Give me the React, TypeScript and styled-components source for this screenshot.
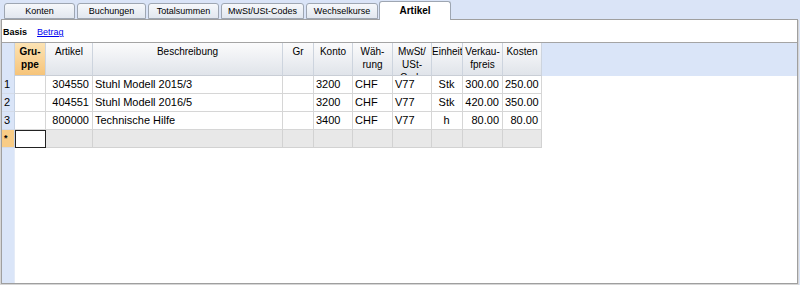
import styled, { createGlobalStyle } from 'styled-components'

const GlobalStyle = createGlobalStyle`
  html, body {
    margin: 0;
    padding: 0;
    background: #dae4f7;
    font-family: "Liberation Sans", Arial, sans-serif;
  }
`

const COLS = '13px 31px 47px 190px 31px 39px 40px 39px 31px 40px 39px'

type Align = 'left' | 'right' | 'center'

const tabs = ['Konten', 'Buchungen', 'Totalsummen', 'MwSt/USt-Codes', 'Wechselkurse', 'Artikel']
const tabWidths = [71, 69, 71, 83, 72, 72]

const headers: { lines: string[]; selected?: boolean }[] = [
  { lines: ['Gru-', 'ppe'], selected: true },
  { lines: ['Artikel'] },
  { lines: ['Beschreibung'] },
  { lines: ['Gr'] },
  { lines: ['Konto'] },
  { lines: ['Wäh-', 'rung'] },
  { lines: ['MwSt/', 'USt-', 'Code'] },
  { lines: ['Einheit'] },
  { lines: ['Verkau-', 'fpreis'] },
  { lines: ['Kosten'] },
]

const aligns: Align[] = ['left', 'right', 'left', 'left', 'left', 'left', 'left', 'center', 'right', 'right']

const rows = [
  ['', '304550', 'Stuhl Modell 2015/3', '', '3200', 'CHF', 'V77', 'Stk', '300.00', '250.00'],
  ['', '404551', 'Stuhl Modell 2016/5', '', '3200', 'CHF', 'V77', 'Stk', '420.00', '350.00'],
  ['', '800000', 'Technische Hilfe', '', '3400', 'CHF', 'V77', 'h', '80.00', '80.00'],
]

export default function App() {
  return (
    <Page>
      <GlobalStyle />
      <TabBar>
        {tabs.map((t, i) => (
          <Tab key={t} $active={t === 'Artikel'} $width={tabWidths[i]}>
            {t}
          </Tab>
        ))}
      </TabBar>

      <Panel>
        <Toolbar>
          <ViewLabel>Basis</ViewLabel>
          <ViewLink href="#">Betrag</ViewLink>
        </Toolbar>

        <Grid>
          <HeaderRow>
            <Corner />
            {headers.map((h, i) => (
              <HeadCell key={i} $selected={h.selected}>
                {h.lines.map((l, j) => (
                  <div key={j}>{l}</div>
                ))}
              </HeadCell>
            ))}
            <HeadRest />
          </HeaderRow>

          {rows.map((r, i) => (
            <Row key={i}>
              <RowNum>{i + 1}</RowNum>
              {r.map((v, j) => (
                <Cell key={j} $align={aligns[j]}>
                  {v}
                </Cell>
              ))}
            </Row>
          ))}

          <Row>
            <RowNum $current>*</RowNum>
            {aligns.map((a, j) => (
              <NewCell key={j} $active={j === 0} />
            ))}
          </Row>

          <Filler>
            <Stripe />
          </Filler>
        </Grid>
      </Panel>
    </Page>
  )
}

const Page = styled.div`
  width: 800px;
  height: 285px;
  display: flex;
  flex-direction: column;
  overflow: hidden;
`

const TabBar = styled.div`
  height: 19px;
  display: flex;
  align-items: flex-end;
  gap: 2px;
  padding-left: 4px;
  position: relative;
  z-index: 2;
`

const Tab = styled.div<{ $active?: boolean; $width: number }>`
  box-sizing: border-box;
  width: ${p => p.$width}px;
  height: ${p => (p.$active ? 19 : 16)}px;
  margin-bottom: ${p => (p.$active ? -1 : 0)}px;
  margin-left: ${p => (p.$active ? -1 : 0)}px;
  border: 1px solid #9ea6b2;
  border-bottom: ${p => (p.$active ? 'none' : '1px solid #9ea6b2')};
  border-radius: 3px 3px 0 0;
  background: ${p => (p.$active ? '#ffffff' : 'linear-gradient(#f6f8fb, #e2e7ef)')};
  color: #000;
  font-size: ${p => (p.$active ? 10 : 9)}px;
  font-weight: ${p => (p.$active ? 700 : 400)};
  line-height: 15px;
  padding-top: ${p => (p.$active ? 1 : 0)}px;
  text-align: center;
  white-space: nowrap;
`

const Panel = styled.div`
  box-sizing: border-box;
  width: 797px;
  height: 265px;
  margin-left: 1px;
  background: #fff;
  border: 1px solid #9f9f9f;
  box-shadow: -1px 1px 0 #d6d6d6, 1px 1px 0 #d6d6d6;
  display: flex;
  flex-direction: column;
`

const Toolbar = styled.div`
  height: 22px;
  box-sizing: border-box;
  padding: 6px 0 0 1px;
  display: flex;
  gap: 10px;
  font-size: 9px;
  line-height: 12px;
`

const ViewLabel = styled.span`
  font-weight: 700;
  color: #000;
`

const ViewLink = styled.a`
  color: #0000ee;
  text-decoration: underline;
`

const Grid = styled.div`
  flex: 1;
  display: flex;
  flex-direction: column;
  border-top: 1px solid #a4a4a4;
  margin-left: 0;
`

const HeaderRow = styled.div`
  display: grid;
  grid-template-columns: ${COLS} 1fr;
  height: 33px;
  font-size: 10px;
  line-height: 13px;
  color: #000;
`

const Corner = styled.div`
  background: #dae5f8;
  border-right: 1px solid #c6d2e4;
`

const HeadCell = styled.div<{ $selected?: boolean }>`
  box-sizing: border-box;
  overflow: hidden;
  padding-top: 2px;
  text-align: center;
  white-space: nowrap;
  border-right: 1px solid #cdd4de;
  border-bottom: 1px solid #c9ced6;
  background: ${p =>
    p.$selected ? 'linear-gradient(#fce3b4, #f6c47a)' : 'linear-gradient(#fbfbfc, #e0e4ea)'};
  font-weight: ${p => (p.$selected ? 700 : 400)};
`

const HeadRest = styled.div`
  background: #dae5f8;
`

const Row = styled.div`
  display: grid;
  grid-template-columns: ${COLS};
  width: max-content;
  height: 18px;
  font-size: 11px;
  line-height: 17px;
  color: #000;
`

const RowNum = styled.div<{ $current?: boolean }>`
  box-sizing: border-box;
  padding-left: 2px;
  background: ${p => (p.$current ? '#f8cc86' : '#dae5f8')};
  border-right: 1px solid #c6d2e4;
  border-bottom: 1px solid #d3dbe8;
  font-size: ${p => (p.$current ? 9 : 11)}px;
  font-weight: ${p => (p.$current ? 700 : 400)};
`

const Cell = styled.div<{ $align: Align }>`
  box-sizing: border-box;
  overflow: hidden;
  white-space: nowrap;
  padding: 0 3px 0 2px;
  text-align: ${p => p.$align};
  background: #fff;
  border-right: 1px solid #d6d6d6;
  border-bottom: 1px solid #d6d6d6;
`

const NewCell = styled.div<{ $active?: boolean }>`
  box-sizing: border-box;
  background: ${p => (p.$active ? '#fff' : '#e8e8e8')};
  border-right: 1px solid ${p => (p.$active ? '#222' : '#d2d2d2')};
  border-bottom: 1px solid ${p => (p.$active ? '#222' : '#d2d2d2')};
  border-left: ${p => (p.$active ? '1px solid #222' : 'none')};
  border-top: ${p => (p.$active ? '1px solid #222' : 'none')};
`

const Filler = styled.div`
  flex: 1;
  display: flex;
`

const Stripe = styled.div`
  width: 13px;
  box-sizing: border-box;
  background: #dae5f8;
  border-right: 1px solid #e4ebf7;
`
